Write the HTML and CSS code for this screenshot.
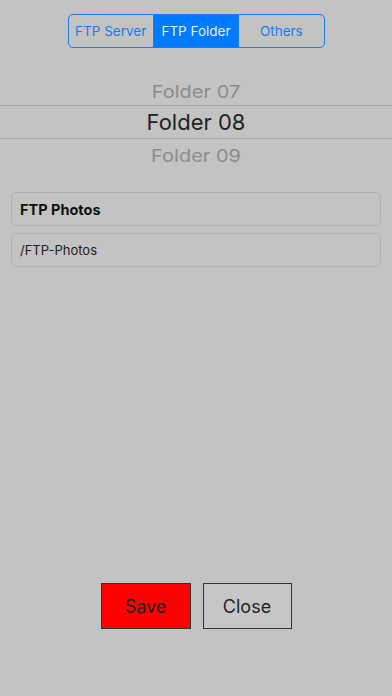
FILE: index.html
```html
<!DOCTYPE html>
<html>
<head>
<meta charset="utf-8">
<link rel="stylesheet" href="styles.css">
</head>
<body>
<div class="page">
  <div class="segmented">
    <div class="seg">FTP Server</div>
    <div class="seg active">FTP Folder</div>
    <div class="seg">Others</div>
  </div>
  <div class="picker">
    <div class="row side top">Folder 07</div>
    <div class="row selected">Folder 08</div>
    <div class="row side bottom">Folder 09</div>
  </div>
  <div class="fields">
    <div class="field title">FTP Photos</div>
    <div class="field path">/FTP-Photos</div>
  </div>
  <div class="buttons">
    <div class="btn save">Save</div>
    <div class="btn close">Close</div>
  </div>
</div>
</body>
</html>
```
FILE: styles.css
```css
html, body {
  margin: 0;
  padding: 0;
  background: #c3c3c3;
}
.page {
  height: 696px;
  display: flex;
  flex-direction: column;
  font-family: Inter, "Liberation Sans", sans-serif;
  box-sizing: border-box;
  padding-top: 14px;
  padding-bottom: 67px;
}
.segmented {
  align-self: center;
  width: 257px;
  height: 34px;
  box-sizing: border-box;
  border: 1px solid #1a7cf0;
  border-radius: 5px;
  display: flex;
  overflow: hidden;
}
.seg {
  flex: 1;
  display: flex;
  align-items: center;
  justify-content: center;
  font-size: 13.5px;
  color: #1a7cf0;
  border-left: 1px solid #1a7cf0;
}
.seg:first-child { border-left: none; }
.seg.active {
  background: #007aff;
  color: #e8f0ff;
}
.picker {
  margin-top: 29px;
  height: 90px;
  overflow: hidden;
  display: flex;
  flex-direction: column;
}
.row {
  display: flex;
  align-items: center;
  justify-content: center;
}
.row.side {
  flex: none;
  height: 28px;
  color: #8c8c8c;
  font-size: 20px;
}
.row.top { transform: scaleY(0.88); padding-top: 2px; box-sizing: border-box; }
.row.bottom { transform: scaleY(0.85); transform-origin: top; padding-top: 6px; }
.row.selected {
  flex: none;
  height: 34px;
  box-sizing: border-box;
  border-top: 1px solid #a9a9a9;
  border-bottom: 1px solid #a9a9a9;
  color: #222;
  font-size: 22px;
}
.fields {
  margin: 25px 11px 0;
  display: flex;
  flex-direction: column;
  gap: 7px;
}
.field {
  height: 34px;
  box-sizing: border-box;
  border: 1px solid #b1b1b1;
  border-radius: 5px;
  padding-left: 8px;
  display: flex;
  align-items: center;
  color: #111;
}
.field.title {
  font-size: 14.5px;
  font-weight: 700;
}
.field.path {
  font-size: 13px;
  color: #222;
}
.buttons {
  margin-top: auto;
  display: flex;
  justify-content: center;
  gap: 12px;
}
.btn {
  width: 90px;
  height: 46px;
  box-sizing: border-box;
  border: 1px solid #333;
  display: flex;
  align-items: center;
  justify-content: center;
  font-size: 18px;
  color: #222;
}
.btn.save { background: #ff0000; }
.btn.close { background: #c6c6c6; width: 89px; }
```
